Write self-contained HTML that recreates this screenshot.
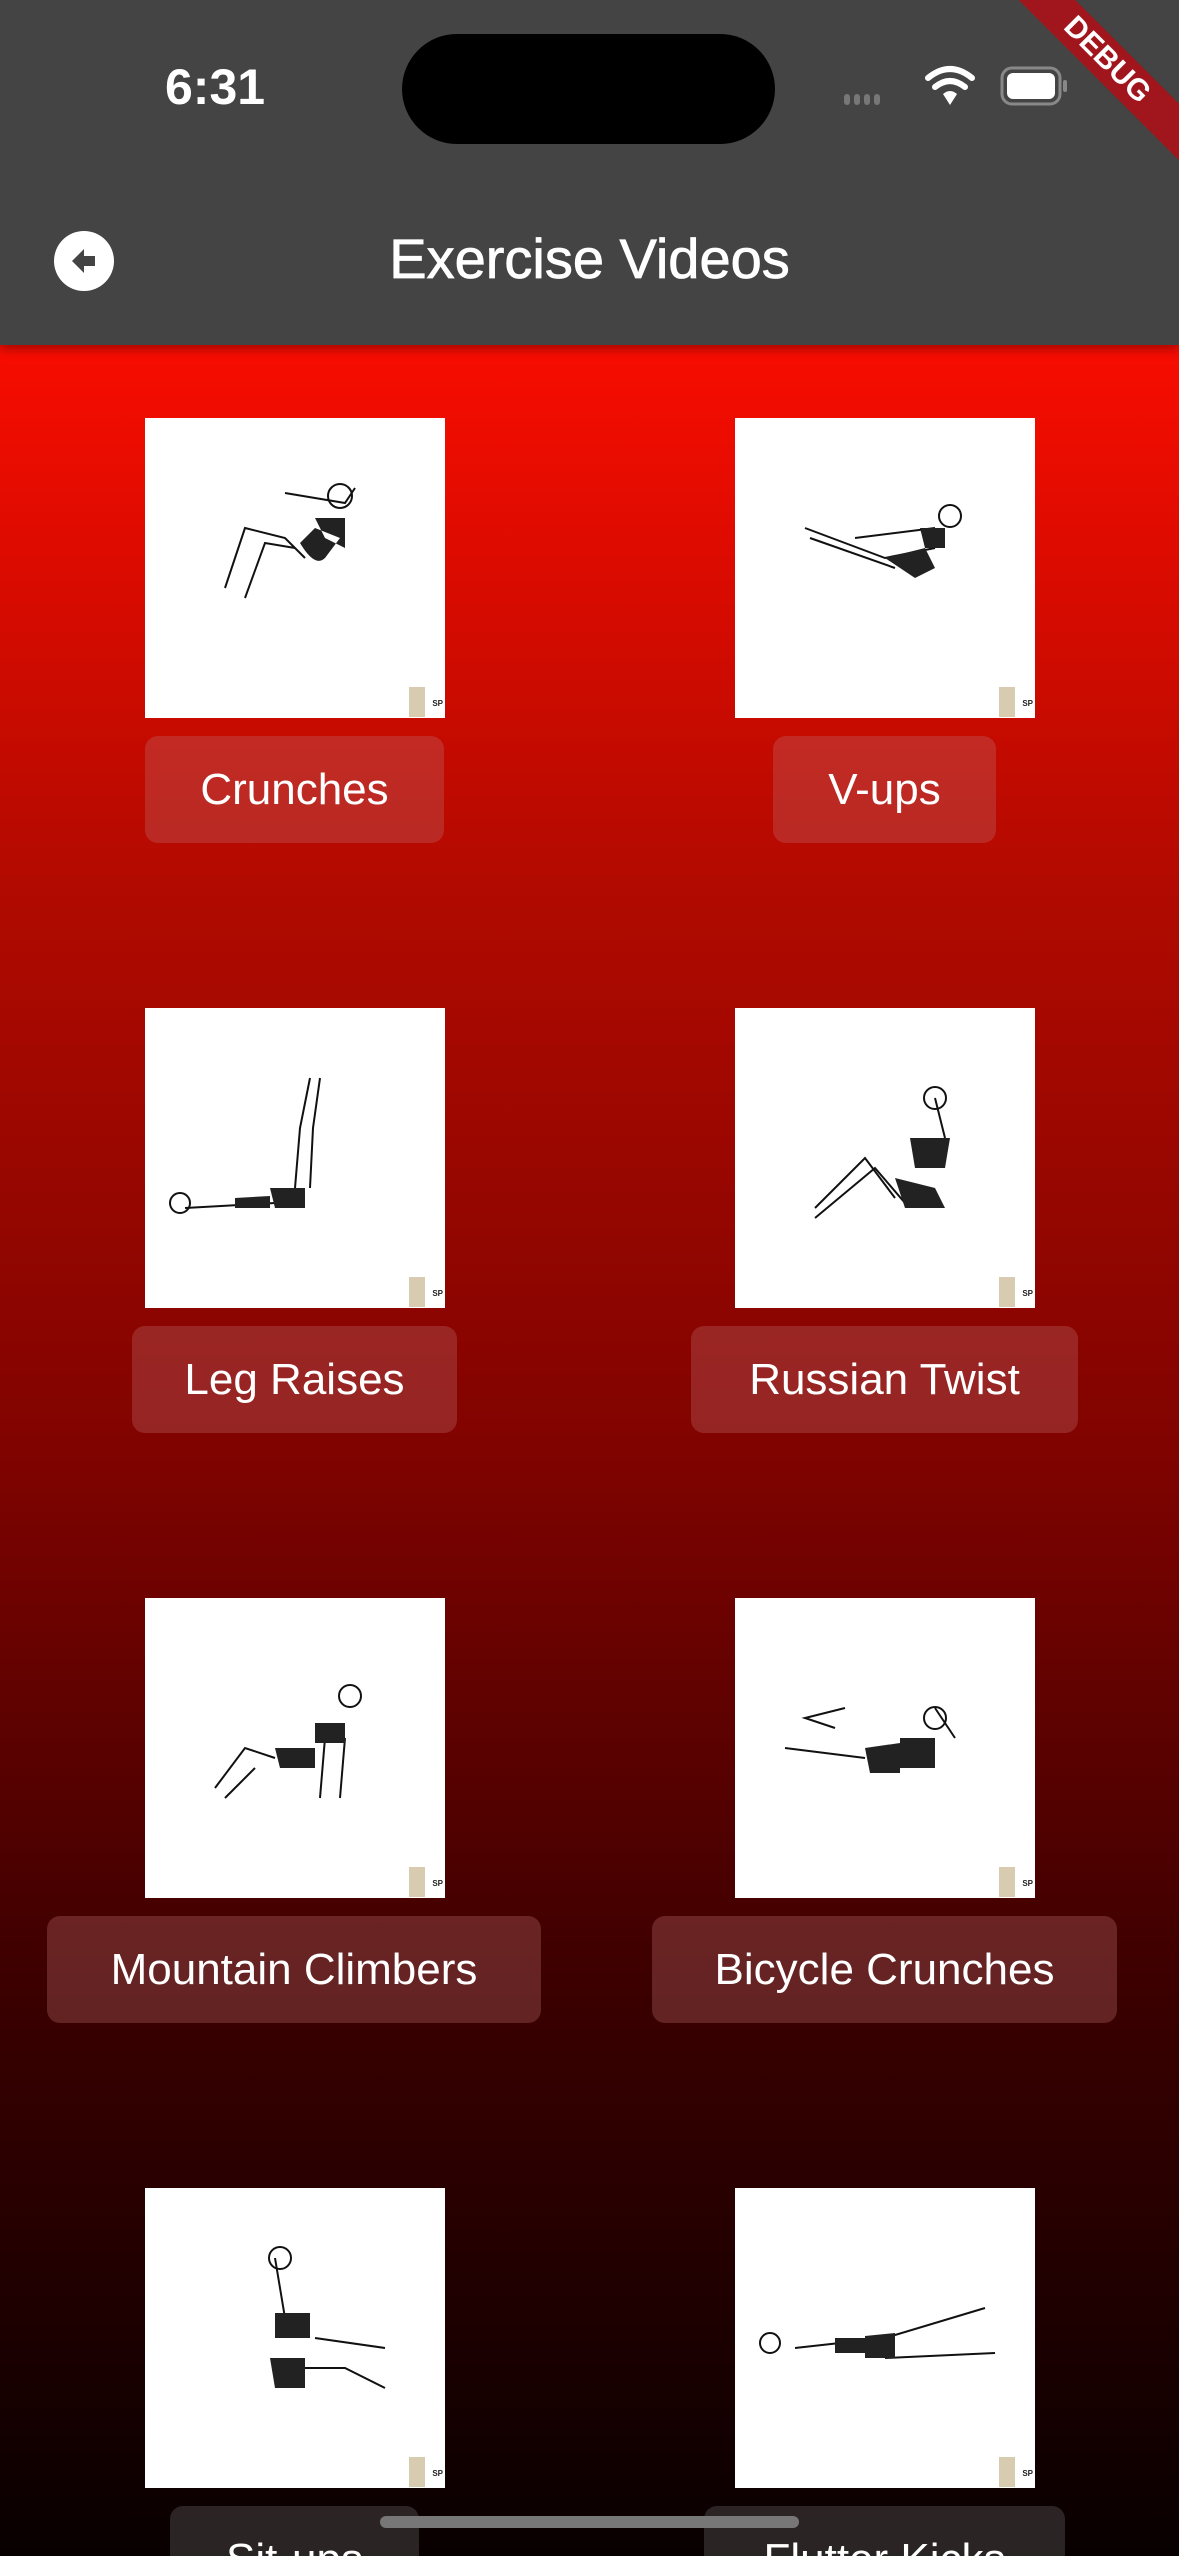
<!DOCTYPE html>
<html><head><meta charset="utf-8"><style>
*{margin:0;padding:0;box-sizing:border-box}
html,body{width:1179px;height:2556px;overflow:hidden;background:#080000}
body{position:relative;font-family:"Liberation Sans",sans-serif}
.bg{position:absolute;left:0;top:0;width:1179px;height:2556px;background:linear-gradient(180deg,#f80c00 0px,#f80c00 345px,#b00a00 900px,#800300 1450px,#3a0000 2000px,#080000 2556px)}
.hdr{position:absolute;left:0;top:0;width:1179px;height:345px;background:#444;box-shadow:0 4px 10px rgba(0,0,0,.35)}
.time{position:absolute;left:165px;top:58px;color:#fff;font-size:50px;font-weight:bold}
.island{position:absolute;left:402px;top:34px;width:373px;height:110px;border-radius:55px;background:#000}
.title{position:absolute;left:0;width:1179px;top:226px;text-align:center;color:#fff;font-size:56px;-webkit-text-stroke:0.8px #fff}
.back{position:absolute;left:54px;top:231px;width:60px;height:60px;border-radius:50%;background:#fff}
.img{position:absolute;width:300px;height:300px;background:#fff;overflow:hidden}
.tag{position:absolute;right:20px;bottom:1px;width:16px;height:30px;background:#d8ccb0}
.sp{position:absolute;right:2px;bottom:10px;font-size:8px;font-weight:bold;color:#222}
.btn{position:absolute;height:107px;border-radius:13px;background:rgba(190,108,108,.32);color:#fff;font-size:44px;line-height:107px;text-align:center}
.home{position:absolute;left:380px;top:2516px;width:419px;height:12px;border-radius:6px;background:#777}
.debug{position:absolute;right:-78px;top:40px;width:300px;height:40px;background:#a0161c;transform:rotate(45deg);color:#fff;font-weight:bold;font-size:30px;text-align:center;line-height:40px}
</style></head><body>
<div class="bg"></div>
<div class="hdr">
<div class="time">6:31</div>
<div class="island"></div>
<svg style="position:absolute;left:840px;top:60px" width="240" height="50">
<g fill="#777"><rect x="4" y="34" width="6" height="11" rx="3"/><rect x="14" y="34" width="6" height="11" rx="3"/><rect x="24" y="34" width="6" height="11" rx="3"/><rect x="34" y="34" width="6" height="11" rx="3"/></g>
<g fill="none" stroke="#fff" stroke-width="6" stroke-linecap="round"><path d="M88 18 Q110 0 132 18"/><path d="M95 27 Q110 15 125 27"/></g>
<path d="M103 34 Q110 28 117 34 L110 45Z" fill="#fff"/>
<rect x="162" y="8" width="58" height="36" rx="10" fill="none" stroke="#888" stroke-width="3"/>
<rect x="167" y="13" width="48" height="26" rx="6" fill="#fff"/>
<rect x="223" y="20" width="4" height="12" rx="2" fill="#888"/>
</svg>
<div class="back"><svg width="60" height="60"><path d="M18 30 L30 18 L30 25 L41 25 L41 35 L30 35 L30 42Z" fill="#444"/></svg></div>
<div class="title">Exercise Videos</div>
</div>
<div class="debug">DEBUG</div>

<div class="img" style="left:145px;top:418px"><svg width="300" height="300"><g stroke="#111" stroke-width="2" fill="none"><path d="M80 170 L100 110 L140 120 L160 140"/><path d="M100 180 L120 125 L150 130"/><path d="M140 75 L200 85 L210 70"/></g><path d="M155 125 Q170 150 180 140 L195 120 L170 110Z M170 100 L200 100 L200 130 L180 120Z" fill="#222"/><circle cx="195" cy="78" r="12" fill="none" stroke="#111" stroke-width="2"/></svg><div class="tag"></div><div class="sp">SP</div></div>
<div class="img" style="left:735px;top:418px"><svg width="300" height="300"><g stroke="#111" stroke-width="2" fill="none"><path d="M70 110 L150 140 L200 130"/><path d="M75 120 L160 150"/><path d="M120 120 L200 110"/></g><path d="M150 140 L180 160 L200 150 L190 130Z M185 110 L210 110 L210 130 L190 130Z" fill="#222"/><circle cx="215" cy="98" r="11" fill="none" stroke="#111" stroke-width="2"/></svg><div class="tag"></div><div class="sp">SP</div></div>
<div class="btn" style="left:145px;top:736px;width:299px">Crunches</div>
<div class="btn" style="left:773px;top:736px;width:223px">V-ups</div>

<div class="img" style="left:145px;top:1008px"><svg width="300" height="300"><g stroke="#111" stroke-width="2" fill="none"><path d="M150 180 L155 120 L165 70"/><path d="M165 180 L168 120 L175 70"/><path d="M40 200 L130 195"/></g><path d="M125 180 L160 180 L160 200 L130 200Z M90 190 L125 188 L125 200 L90 200Z" fill="#222"/><circle cx="35" cy="195" r="10" fill="none" stroke="#111" stroke-width="2"/></svg><div class="tag"></div><div class="sp">SP</div></div>
<div class="img" style="left:735px;top:1008px"><svg width="300" height="300"><g stroke="#111" stroke-width="2" fill="none"><path d="M80 200 L130 150 L160 190"/><path d="M80 210 L140 160 L170 195"/><path d="M200 90 L210 130"/></g><path d="M160 170 L200 180 L210 200 L170 200Z M175 130 L215 130 L210 160 L180 160Z" fill="#222"/><circle cx="200" cy="90" r="11" fill="none" stroke="#111" stroke-width="2"/></svg><div class="tag"></div><div class="sp">SP</div></div>
<div class="btn" style="left:132px;top:1326px;width:325px">Leg Raises</div>
<div class="btn" style="left:691px;top:1326px;width:387px">Russian Twist</div>

<div class="img" style="left:145px;top:1598px"><svg width="300" height="300"><g stroke="#111" stroke-width="2" fill="none"><path d="M70 190 L100 150 L130 160"/><path d="M80 200 L110 170"/><path d="M180 140 L175 200 M200 140 L195 200"/></g><path d="M130 150 L170 150 L170 170 L135 170Z M170 125 L200 125 L200 145 L170 145Z" fill="#222"/><circle cx="205" cy="98" r="11" fill="none" stroke="#111" stroke-width="2"/></svg><div class="tag"></div><div class="sp">SP</div></div>
<div class="img" style="left:735px;top:1598px"><svg width="300" height="300"><g stroke="#111" stroke-width="2" fill="none"><path d="M50 150 L130 160"/><path d="M100 130 L70 120 L110 110"/><path d="M200 110 L220 140"/></g><path d="M130 150 L165 145 L165 175 L135 175Z M165 140 L200 140 L200 170 L165 170Z" fill="#222"/><circle cx="200" cy="120" r="11" fill="none" stroke="#111" stroke-width="2"/></svg><div class="tag"></div><div class="sp">SP</div></div>
<div class="btn" style="left:47px;top:1916px;width:494px">Mountain Climbers</div>
<div class="btn" style="left:652px;top:1916px;width:465px">Bicycle Crunches</div>

<div class="img" style="left:145px;top:2188px"><svg width="300" height="300"><g stroke="#111" stroke-width="2" fill="none"><path d="M130 180 L200 180 L240 200"/><path d="M170 150 L240 160"/><path d="M130 70 L140 130"/></g><path d="M130 125 L165 125 L165 150 L130 150Z M125 170 L160 170 L160 200 L130 200Z" fill="#222"/><circle cx="135" cy="70" r="11" fill="none" stroke="#111" stroke-width="2"/></svg><div class="tag"></div><div class="sp">SP</div></div>
<div class="img" style="left:735px;top:2188px"><svg width="300" height="300"><g stroke="#111" stroke-width="2" fill="none"><path d="M60 160 L150 150 L250 120"/><path d="M150 170 L260 165"/></g><path d="M100 150 L130 150 L130 165 L100 165Z M130 148 L160 145 L160 170 L130 170Z" fill="#222"/><circle cx="35" cy="155" r="10" fill="none" stroke="#111" stroke-width="2"/></svg><div class="tag"></div><div class="sp">SP</div></div>
<div class="btn" style="left:170px;top:2506px;width:249px;background:rgba(120,120,120,.3)">Sit-ups</div>
<div class="btn" style="left:704px;top:2506px;width:361px;background:rgba(120,120,120,.3)">Flutter Kicks</div>

<div class="home"></div>
</body></html>
